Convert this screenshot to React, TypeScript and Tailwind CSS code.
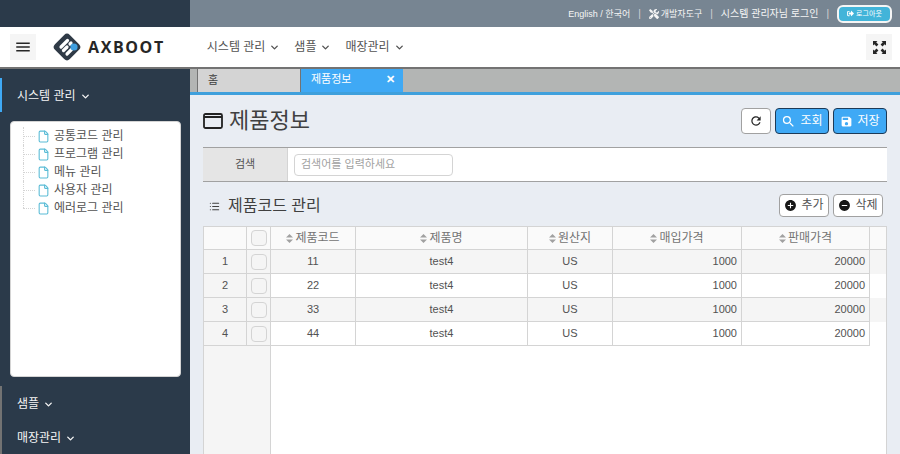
import { ChevronDown, File, List } from "lucide-react";
import { MdMenu, MdSearch, MdSave, MdRefresh, MdAddCircle, MdRemoveCircle } from "react-icons/md";
import { FaTools, FaSignOutAlt } from "react-icons/fa";

const cols = ["w-[85px]", "w-[172px]", "w-[85px]", "w-[129px]", "w-[128px]"];
const headers = ["제품코드", "제품명", "원산지", "매입가격", "판매가격"];
const rows = [
  ["1", "11"],
  ["2", "22"],
  ["3", "33"],
  ["4", "44"],
];
const tree = ["공통코드 관리", "프로그램 관리", "메뉴 관리", "사용자 관리", "에러로그 관리"];

function Caret() {
  return (
    <svg width="7" height="9" viewBox="0 0 7 9" className="text-neutral-400">
      <path d="M3.5 0 7 3.6H0z M3.5 9 0 5.4h7z" fill="currentColor" />
    </svg>
  );
}

function Box() {
  return <div className="h-4 w-4 rounded-sm border border-neutral-300 bg-neutral-100" />;
}

export default function App() {
  return (
    <div
      className="flex h-screen flex-col overflow-hidden bg-[#e9edf3] text-xs text-neutral-600"
      style={{ fontFamily: '"Liberation Sans", "Noto Sans CJK KR", sans-serif' }}
    >
      <div className="flex h-[27px] shrink-0 bg-[#778592]">
        <div className="w-[190px] bg-[#2b3a4a]" />
        <div className="flex flex-1 items-center justify-end gap-2 pr-2 text-[10px] text-neutral-100">
          <span className="text-[9px]">English / 한국어</span>
          <span className="text-neutral-300">|</span>
          <span className="flex items-center gap-0.5">
            <FaTools size={10} />
            <span className="text-[9px]">개발자도구</span>
          </span>
          <span className="text-neutral-300">|</span>
          <span>시스템 관리자님 로그인</span>
          <span className="text-neutral-300">|</span>
          <span className="flex h-[18px] w-[55px] items-center justify-center gap-0.5 rounded-md border-2 border-neutral-100 bg-[#42b4d9] text-[7px] text-white">
            <FaSignOutAlt size={7} />
            로그아웃
          </span>
        </div>
      </div>

      <div className="flex h-[42px] shrink-0 items-center border-b-2 border-neutral-500 bg-white pl-2.5 pr-2">
        <div className="flex h-[26px] w-[26px] items-center justify-center bg-neutral-100 text-neutral-800">
          <MdMenu size={18} />
        </div>
        <svg width="30" height="30" viewBox="0 0 30 30" className="ml-4">
          <rect x="4.5" y="4.5" width="21" height="21" rx="4" transform="rotate(45 15 15)" fill="#2f3a46" />
          <g stroke="#fff" strokeWidth="3.2" strokeLinecap="round">
            <path d="M9 15 15.5 8.5" />
            <path d="M11.5 18.5 15 15" />
            <path d="M15 22 19.5 17.5" />
            <path d="M18 12 19 11" />
          </g>
          <circle cx="22" cy="15" r="3.6" fill="#3f9fe0" />
        </svg>
        <span className="ml-1.5 text-base font-bold tracking-widest text-neutral-800" style={{ fontFamily: '"Open Sans", sans-serif' }}>
          AXBOOT
        </span>
        <nav className="ml-[42px] flex items-center gap-3.5 text-xs text-neutral-600">
          <span className="flex items-center gap-1">시스템 관리<ChevronDown size={11} strokeWidth={3} /></span>
          <span className="flex items-center gap-1">샘플<ChevronDown size={11} strokeWidth={3} /></span>
          <span className="flex items-center gap-1">매장관리<ChevronDown size={11} strokeWidth={3} /></span>
        </nav>
        <div className="ml-auto flex h-[26px] w-[26px] items-center justify-center bg-neutral-100 text-neutral-800">
          <svg width="13" height="13" viewBox="0 0 13 13" fill="currentColor">
            <path d="M0 0h4.5L3.2 1.3 5.4 3.5 3.5 5.4 1.3 3.2 0 4.5z" />
            <path d="M13 0v4.5L11.7 3.2 9.5 5.4 7.6 3.5 9.8 1.3 8.5 0z" />
            <path d="M0 13V8.5l1.3 1.3 2.2-2.2 1.9 1.9-2.2 2.2L4.5 13z" />
            <path d="M13 13H8.5l1.3-1.3-2.2-2.2 1.9-1.9 2.2 2.2L13 8.5z" />
          </svg>
        </div>
      </div>

      <div className="flex min-h-0 flex-1">
        <aside className="flex w-[190px] shrink-0 flex-col bg-[#2b3a4a] text-xs text-neutral-100">
          <div className="mt-[9px] flex h-[34px] items-center gap-1 border-l-2 border-[#3fa9f5] pl-[15px] pt-0.5">
            시스템 관리<ChevronDown size={11} strokeWidth={3} />
          </div>
          <div className="mt-[9px] ml-2.5 h-64 w-[171px] rounded-sm border border-neutral-300 bg-white px-3 pt-[5px] text-neutral-600">
            {tree.map((t, i) => (
              <div key={t} className="relative flex h-[18px] items-center gap-1 pl-3.5">
                <span className="absolute left-0 top-1/2 w-3 border-t border-dotted border-neutral-300" />
                <span className={`absolute left-0 top-0 border-l border-dotted border-neutral-300 ${i === 4 ? "h-1/2" : "h-full"}`} />
                <File size={13} className="text-[#5bbcd6]" />
                {t}
              </div>
            ))}
          </div>
          <div className="mt-[9px] flex flex-1 flex-col border-l-2 border-neutral-500 pl-[15px]">
            <div className="flex h-[34px] items-center gap-1 pt-0.5">샘플<ChevronDown size={11} strokeWidth={3} /></div>
            <div className="flex h-[34px] items-center gap-1 pt-0.5">매장관리<ChevronDown size={11} strokeWidth={3} /></div>
          </div>
        </aside>

        <main className="flex min-w-0 flex-1 flex-col">
          <div className="flex h-[26px] shrink-0 border-b-[3px] border-[#3fa0dc] bg-[#b3b5b4] pl-[7px]">
            <div className="flex w-[104px] items-center border-x border-neutral-500 bg-neutral-300 pl-2.5 text-[11px] text-neutral-700">홈</div>
            <div className="flex w-[102px] items-center justify-between bg-[#3fa9f5] pb-0.5 pl-2.5 pr-2 text-[11px] text-white">
              제품정보
              <span className="font-bold">✕</span>
            </div>
          </div>

          <div className="flex min-h-0 flex-1 flex-col px-[13px]">
            <div className="flex h-[52px] shrink-0 items-center justify-between">
              <h1 className="flex items-center gap-1.5 text-[22px] text-neutral-700">
                <svg width="20" height="16" viewBox="0 0 20 16" fill="none" stroke="#222" strokeWidth="1.8">
                  <rect x="1" y="1" width="18" height="14" rx="1.5" />
                  <path d="M1 4h18" strokeWidth="2" />
                </svg>
                제품정보
              </h1>
              <div className="flex items-center gap-1 text-xs">
                <button className="flex h-[26px] w-[30px] items-center justify-center rounded border border-neutral-400 bg-white text-neutral-800">
                  <MdRefresh size={14} />
                </button>
                <button className="flex h-[26px] w-[54px] items-center justify-center gap-1 rounded border border-[#1d3a57] bg-[#3fa9f5] text-white">
                  <MdSearch size={15} />
                  조회
                </button>
                <button className="flex h-[26px] w-[54px] items-center justify-center gap-1 rounded border border-[#1d3a57] bg-[#3fa9f5] text-white">
                  <MdSave size={13} />
                  저장
                </button>
              </div>
            </div>

            <div className="flex h-[35px] shrink-0 border-y border-neutral-400 bg-white">
              <div className="flex w-[85px] items-center justify-center border-r border-neutral-300 bg-neutral-200 text-[11px] text-neutral-600">검색</div>
              <div className="flex items-center pl-1.5">
                <div className="flex h-[22px] w-[159px] items-center rounded-sm border border-neutral-300 bg-white pl-1.5 text-[11px] text-neutral-400">
                  검색어를 입력하세요
                </div>
              </div>
            </div>

            <div className="flex h-[44px] shrink-0 items-center justify-between pl-1.5 pr-1 pt-0.5">
              <h2 className="flex items-center gap-2 pt-0.5 text-base text-neutral-700">
                <List size={11} strokeWidth={2.5} />
                제품코드 관리
              </h2>
              <div className="flex gap-1 text-xs">
                <button className="flex h-[23px] w-[50px] items-center justify-center gap-1 rounded border border-neutral-400 bg-white">
                  <MdAddCircle size={13} className="text-neutral-900" />
                  추가
                </button>
                <button className="flex h-[23px] w-[50px] items-center justify-center gap-1 rounded border border-neutral-400 bg-white">
                  <MdRemoveCircle size={13} className="text-neutral-900" />
                  삭제
                </button>
              </div>
            </div>

            <div className="flex min-h-0 flex-1 flex-col border-x border-neutral-300 bg-white text-[11px] text-neutral-600">
              <div className="flex h-6 shrink-0 border-y border-neutral-300 bg-neutral-50 text-xs text-neutral-500">
                <div className="w-[43px] border-r border-neutral-300" />
                <div className="flex w-6 items-center justify-center border-r border-neutral-300"><Box /></div>
                {headers.map((h, i) => (
                  <div key={h} className={`flex items-center justify-center gap-0.5 border-r border-neutral-300 ${cols[i]}`}>
                    <Caret />
                    {h}
                  </div>
                ))}
              </div>
              {rows.map(([n, code], r) => (
                <div key={n} className={`flex h-6 shrink-0 ${r % 2 === 0 ? "bg-neutral-100" : "bg-white"}`}>
                  <div className="flex w-[43px] items-center justify-center border-b border-r border-neutral-300 bg-neutral-100">{n}</div>
                  <div className="flex w-6 items-center justify-center border-b border-r border-neutral-300 bg-neutral-100"><Box /></div>
                  <div className={`flex items-center justify-center border-b border-r border-neutral-300 ${cols[0]}`}>{code}</div>
                  <div className={`flex items-center justify-center border-b border-r border-neutral-300 ${cols[1]}`}>test4</div>
                  <div className={`flex items-center justify-center border-b border-r border-neutral-300 ${cols[2]}`}>US</div>
                  <div className={`flex items-center justify-end border-b border-r border-neutral-300 pr-1 ${cols[3]}`}>1000</div>
                  <div className={`flex items-center justify-end border-b border-r border-neutral-300 pr-1 ${cols[4]}`}>20000</div>
                </div>
              ))}
              <div className="flex flex-1">
                <div className="w-[67px] border-r border-neutral-300 bg-neutral-100" />
              </div>
            </div>
          </div>
        </main>
      </div>
    </div>
  );
}
